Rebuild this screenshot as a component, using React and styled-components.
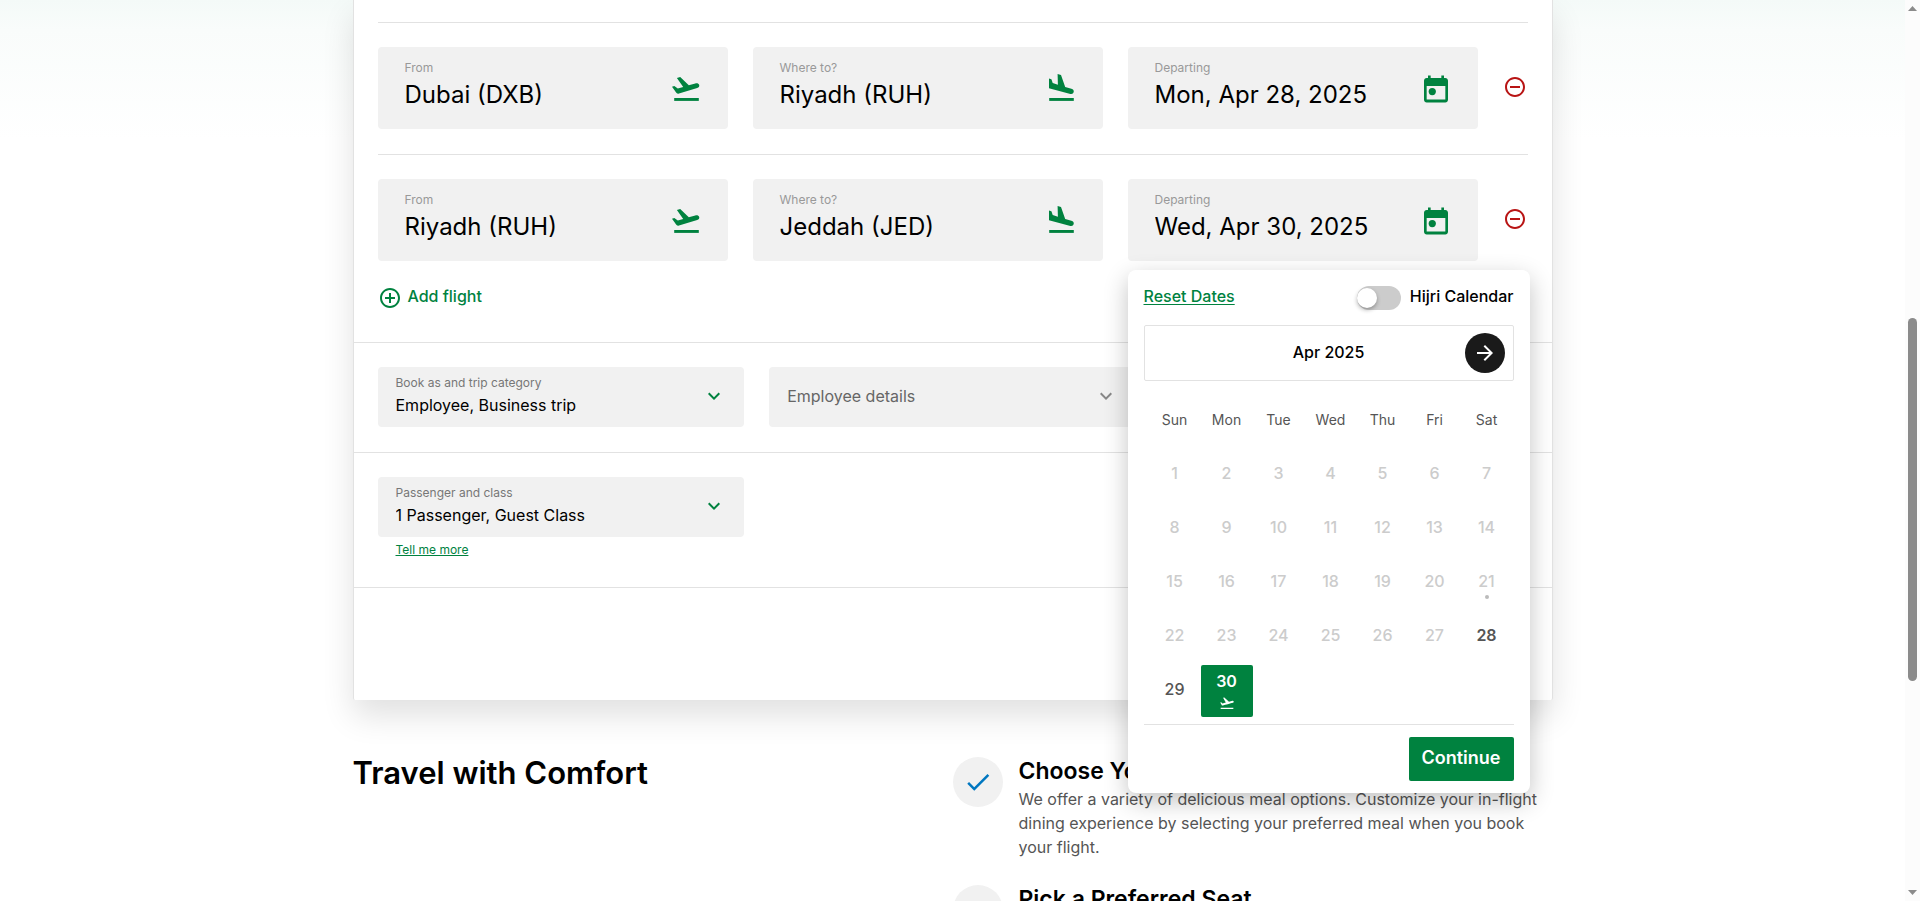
import React, { useState } from "react";
import styled, { createGlobalStyle } from "styled-components";
import {
  MdAddCircleOutline,
  MdArrowForward,
  MdCheck,
  MdExpandMore,
  MdFlightTakeoff,
  MdRemoveCircleOutline,
} from "react-icons/md";

const green = "#00823f";
const line = "#e2e2e2";
const fieldGrey = "#f1f1f1";

const GlobalStyle = createGlobalStyle`
  *, *::before, *::after { box-sizing: border-box; }
  body {
    margin: 0;
    background: #fff;
    color: #000;
    font-family: Inter, "Open Sans", sans-serif;
    font-size: 16px;
    line-height: 24px;
  }
  button, input, select { font: inherit; color: inherit; margin: 0; }
  button { border: 0; background: none; padding: 0; cursor: pointer; }
  h1, h2, h3, p { margin: 0; }
`;

const Shell = styled.div`
  display: flex;
  height: 100vh;
  overflow: hidden;
`;

const Main = styled.main`
  flex: 1;
  min-width: 0;
  background: linear-gradient(#f4faf8, #f9fcfb 30px, #fff 140px);
`;

const Container = styled.div`
  max-width: 1200px;
  margin: 0 auto;
`;

const Card = styled.section`
  padding-top: 22px;
  background: #fff;
  border: solid ${line};
  border-width: 0 1px;
  border-radius: 0 0 2px 2px;
  box-shadow: 0 16px 32px rgba(0, 0, 0, 0.12);
`;

const Flights = styled.div`
  padding: 0 24px 32px;
`;

const FlightRow = styled.div`
  display: grid;
  grid-template-columns: repeat(3, minmax(0, 1fr)) 25px;
  gap: 25px;
  align-items: center;
  padding: 24px 0 25px;
  border-top: 1px solid ${line};
`;

const FieldSlot = styled.div`
  position: relative;
`;

const Field = styled.div`
  display: flex;
  align-items: center;
  justify-content: space-between;
  min-height: 82px;
  padding: 13px 26px 9px 27px;
  border-radius: 4px;
  background: ${fieldGrey};
  svg { flex: none; color: ${green}; }
`;

const FieldText = styled.div`
  display: flex;
  flex-direction: column;
  flex: 1;
  min-width: 0;
  gap: ${(p) => (p.$large ? "3px" : "2px")};
  align-self: flex-start;
`;

const FieldLabel = styled.label`
  font-size: 12px;
  line-height: 16px;
  color: ${(p) => (p.$dark ? "#777" : "#999")};
`;

const FieldInput = styled.input`
  width: 100%;
  height: 32px;
  padding: 0;
  border: 0;
  outline: 0;
  background: none;
  font-size: 24px;
  line-height: 32px;
`;

const RemoveButton = styled.button`
  display: flex;
  justify-content: flex-end;
  padding: 0 1px 2px 0;
  color: #b81414;
`;

const AddButton = styled.button`
  display: flex;
  align-items: flex-start;
  gap: 6px;
  line-height: 20px;
  font-weight: 500;
  color: ${green};
`;

const Section = styled.div`
  min-height: ${(p) => p.$minHeight || "0"};
  padding: 24px 24px ${(p) => p.$bottom || "25px"};
  border-top: 1px solid ${line};
`;

const SelectGrid = styled.div`
  display: grid;
  grid-template-columns: repeat(3, minmax(0, 1fr));
  gap: 25px;
`;

const SelectBox = styled.div`
  display: flex;
  align-items: center;
  min-height: 60px;
  padding: 8px 18px 10px;
  border-radius: 4px;
  background: ${fieldGrey};
  color: ${(p) => (p.$muted ? "#666" : "#000")};
  svg { flex: none; color: ${(p) => (p.$muted ? "#888" : green)}; }
`;

const Select = styled.select`
  width: 100%;
  height: 24px;
  padding: 0;
  border: 0;
  outline: 0;
  appearance: none;
  background: none;
  line-height: 24px;
`;

const SmallLink = styled.a`
  display: block;
  width: max-content;
  margin: 5px 18px 0;
  font-size: 12px;
  line-height: 16px;
  color: ${green};
`;

const Popover = styled.div`
  position: absolute;
  z-index: 2;
  top: calc(100% + 9px);
  left: 0;
  width: 402px;
  padding: 16px 16px 12px;
  border-radius: 8px;
  background: #fff;
  box-shadow: 0 8px 24px rgba(0, 0, 0, 0.24);
`;

const PopoverHead = styled.div`
  display: flex;
  justify-content: space-between;
  line-height: 20px;
  font-weight: 500;
`;

const ResetButton = styled.button`
  align-self: flex-start;
  line-height: 20px;
  color: ${green};
  text-decoration: underline;
  text-underline-offset: 2px;
`;

const ToggleLabel = styled.label`
  display: flex;
  gap: 9px;
`;

const Toggle = styled.input`
  appearance: none;
  display: flex;
  align-items: center;
  width: 44px;
  height: 24px;
  border-radius: 12px;
  background: #ccc;
  cursor: pointer;
  &::before {
    content: "";
    width: 20px;
    height: 20px;
    border-radius: 50%;
    background: #fff;
    box-shadow: 0 2px 4px rgba(0, 0, 0, 0.3);
  }
  &:checked { justify-content: flex-end; background: ${green}; }
`;

const MonthBar = styled.div`
  display: grid;
  grid-template-columns: 40px 1fr 40px;
  align-items: center;
  margin-top: 15px;
  padding: 7px 8px;
  border: 1px solid ${line};
  border-radius: 2px;
`;

const MonthName = styled.h3`
  grid-column: 2;
  padding-bottom: 3px;
  font-size: 16px;
  line-height: 24px;
  font-weight: 500;
  text-align: center;
`;

const NextButton = styled.button`
  display: grid;
  place-items: center;
  width: 40px;
  height: 40px;
  border-radius: 50%;
  background: #1a1a1a;
  color: #fff;
`;

const Calendar = styled.table`
  width: 364px;
  margin: 23px 1px 0 auto;
  table-layout: fixed;
  border-collapse: separate;
  border-spacing: 0 2px;
`;

const Weekday = styled.th`
  height: 41px;
  padding: 0 0 14px;
  font-size: 14px;
  font-weight: 400;
  color: #555;
`;

const DayCell = styled.td`
  height: 52px;
  padding: 0;
`;

const Day = styled.button`
  display: flex;
  flex-direction: column;
  align-items: center;
  justify-content: center;
  gap: ${(p) => (p.$selected ? "4px" : "0")};
  width: 100%;
  height: 52px;
  padding-bottom: ${(p) => (p.$selected ? "0" : "4px")};
  border-radius: 2px;
  line-height: 20px;
  font-weight: ${(p) => (p.$selected ? 600 : p.$strong ? 600 : 500)};
  color: ${(p) => (p.$selected ? "#fff" : p.disabled ? "#ccc" : "#555")};
  background: ${(p) => (p.$selected ? green : "none")};
`;

const TodayDay = styled(Day)`
  padding-top: 10px;
  padding-bottom: 4px;
  gap: 2px;
  &::after {
    content: "";
    width: 4px;
    height: 4px;
    border-radius: 50%;
    margin: 2px 0;
    background: #bbb;
  }
`;

const PopoverFoot = styled.div`
  display: flex;
  justify-content: flex-end;
  margin-top: 5px;
  padding-top: 12px;
  border-top: 1px solid ${line};
`;

const ContinueButton = styled.button`
  padding: 9px 13px 11px;
  border-radius: 2px;
  background: ${green};
  color: #fff;
  font-size: 18px;
  line-height: 24px;
  font-weight: 600;
`;

const Comfort = styled.section`
  display: grid;
  grid-template-columns: 1fr 1fr;
  padding-top: 57px;
`;

const ComfortTitle = styled.h2`
  font-size: 31px;
  line-height: 32px;
  font-weight: 600;
`;

const FeatureList = styled.div`
  display: flex;
  flex-direction: column;
  gap: 26px;
`;

const Feature = styled.article`
  display: flex;
  gap: 16px;
`;

const FeatureBadge = styled.span`
  display: grid;
  place-items: center;
  flex: none;
  width: 50px;
  height: 50px;
  border-radius: 50%;
  background: ${fieldGrey};
  color: #0077c0;
`;

const FeatureTitle = styled.h3`
  margin-bottom: 2px;
  font-size: 23px;
  line-height: 28px;
  font-weight: 600;
`;

const FeatureText = styled.p`
  color: #555;
`;

const Scrollbar = styled.div`
  display: flex;
  flex-direction: column;
  align-items: center;
  justify-content: space-between;
  width: 15px;
  padding: 6px 0;
  background: #fcfcfc;
  color: #8b8b8b;
  svg { display: block; }
`;

const Track = styled.div`
  display: flex;
  flex-direction: column;
  flex: 1;
  &::before { content: ""; flex: 307; }
  &::after { content: ""; flex: 209; }
`;

const Thumb = styled.div`
  flex: 362;
  width: 9px;
  border-radius: 5px;
  background: #8b8b8b;
`;

const TakeoffIcon = () => (
  <svg width="32" height="32" viewBox="0 0 32 32" fill="currentColor" aria-hidden="true">
    <path d="M6.900 3.900 10.200 3l8.600 8.200 6.500-1.700c1.900-.5 3.500.2 3.900 1.500.4 1.400-.5 2.600-2 3.100L9 19.500c-1.300.4-2.300.1-2.900-.9L2 12.700l2.300-.8 3.500 2.600 5.400-1.400z" />
    <path d="M4.200 24h24.600v2.900H4.200z" />
  </svg>
);

const LandingIcon = () => (
  <svg width="32" height="32" viewBox="0 0 32 32" fill="currentColor" aria-hidden="true">
    <path d="M4 4.600l2.400.7L7.700 9l5.200 1.700L12.600.1l3.400 1 4.200 12 6.200 1.700c1.900.5 2.700 1.900 2.300 3.300-.4 1.500-1.600 2.300-3.300 1.900L4 14.200z" />
    <path d="M4.200 24h24.600v2.900H4.200z" />
  </svg>
);

const CalendarIcon = () => (
  <svg width="32" height="32" viewBox="0 0 24 24" fill="currentColor" aria-hidden="true">
    <path
      fillRule="evenodd"
      d="M6 1.200h2V3h8V1.200h2V3h1c1.100 0 2 .9 2 2v14.300c0 1.100-.9 2-2 2H5c-1.100 0-2-.9-2-2V5c0-1.100.9-2 2-2h1zM5 9v10.200h14V9z"
    />
    <circle cx="9.200" cy="13.200" r="2.700" />
  </svg>
);

const TripField = ({ id, label, value, icon, children }) => (
  <FieldSlot>
    <Field>
      <FieldText $large>
        <FieldLabel htmlFor={id}>{label}</FieldLabel>
        <FieldInput id={id} defaultValue={value} />
      </FieldText>
      {icon}
    </Field>
    {children}
  </FieldSlot>
);

const SelectField = ({ id, label, value }) => (
  <SelectBox>
    <FieldText>
      <FieldLabel $dark htmlFor={id}>{label}</FieldLabel>
      <Select id={id}>
        <option>{value}</option>
      </Select>
    </FieldText>
    <MdExpandMore size={24} />
  </SelectBox>
);

const weekdays = ["Sun", "Mon", "Tue", "Wed", "Thu", "Fri", "Sat"];
const weeks = [0, 1, 2, 3, 4].map((w) =>
  weekdays.map((_, d) => w * 7 + d + 1).filter((n) => n <= 30)
);

const DayButton = ({ day }) => {
  if (day === 21) return <TodayDay disabled>{day}</TodayDay>;
  return (
    <Day disabled={day < 28} $strong={day === 28} $selected={day === 30}>
      {day}
      {day === 30 && <MdFlightTakeoff size={16} />}
    </Day>
  );
};

const DatePicker = () => {
  const [hijri, setHijri] = useState(false);
  return (
    <Popover>
      <PopoverHead>
        <ResetButton>Reset Dates</ResetButton>
        <ToggleLabel>
          <Toggle type="checkbox" checked={hijri} onChange={() => setHijri(!hijri)} />
          Hijri Calendar
        </ToggleLabel>
      </PopoverHead>
      <MonthBar>
        <MonthName>Apr 2025</MonthName>
        <NextButton aria-label="Next month">
          <MdArrowForward size={24} />
        </NextButton>
      </MonthBar>
      <Calendar>
        <thead>
          <tr>
            {weekdays.map((d) => (
              <Weekday key={d} scope="col">{d}</Weekday>
            ))}
          </tr>
        </thead>
        <tbody>
          {weeks.map((week) => (
            <tr key={week[0]}>
              {week.map((day) => (
                <DayCell key={day}>
                  <DayButton day={day} />
                </DayCell>
              ))}
            </tr>
          ))}
        </tbody>
      </Calendar>
      <PopoverFoot>
        <ContinueButton>Continue</ContinueButton>
      </PopoverFoot>
    </Popover>
  );
};

const flights = [
  { id: "leg2", from: "Dubai (DXB)", to: "Riyadh (RUH)", date: "Mon, Apr 28, 2025" },
  { id: "leg3", from: "Riyadh (RUH)", to: "Jeddah (JED)", date: "Wed, Apr 30, 2025", open: true },
];

export default function App() {
  return (
    <>
      <GlobalStyle />
      <Shell>
        <Main>
          <Container>
            <Card>
              <Flights>
                {flights.map((f) => (
                  <FlightRow key={f.id}>
                    <TripField id={`${f.id}-from`} label="From" value={f.from} icon={<TakeoffIcon />} />
                    <TripField id={`${f.id}-to`} label="Where to?" value={f.to} icon={<LandingIcon />} />
                    <TripField id={`${f.id}-date`} label="Departing" value={f.date} icon={<CalendarIcon />}>
                      {f.open && <DatePicker />}
                    </TripField>
                    <RemoveButton aria-label="Remove flight">
                      <MdRemoveCircleOutline size={24} />
                    </RemoveButton>
                  </FlightRow>
                ))}
                <AddButton>
                  <MdAddCircleOutline size={24} />
                  Add flight
                </AddButton>
              </Flights>
              <Section>
                <SelectGrid>
                  <SelectField id="category" label="Book as and trip category" value="Employee, Business trip" />
                  <SelectBox $muted>
                    <Select aria-label="Employee details">
                      <option>Employee details</option>
                    </Select>
                    <MdExpandMore size={24} />
                  </SelectBox>
                </SelectGrid>
              </Section>
              <Section $bottom="29px">
                <SelectGrid>
                  <SelectField id="passengers" label="Passenger and class" value="1 Passenger, Guest Class" />
                </SelectGrid>
                <SmallLink href="#classes">Tell me more</SmallLink>
              </Section>
              <Section $minHeight="113px" />
            </Card>
            <Comfort>
              <ComfortTitle>Travel with Comfort</ComfortTitle>
              <FeatureList>
                <Feature>
                  <FeatureBadge><MdCheck size={30} /></FeatureBadge>
                  <div>
                    <FeatureTitle>Choose Your Meal</FeatureTitle>
                    <FeatureText>
                      We offer a variety of delicious meal options. Customize your in-flight dining
                      experience by selecting your preferred meal when you book your flight.
                    </FeatureText>
                  </div>
                </Feature>
                <Feature>
                  <FeatureBadge><MdCheck size={30} /></FeatureBadge>
                  <div>
                    <FeatureTitle>Pick a Preferred Seat</FeatureTitle>
                  </div>
                </Feature>
              </FeatureList>
            </Comfort>
          </Container>
        </Main>
        <Scrollbar aria-hidden="true">
          <svg width="9" height="5" viewBox="0 0 9 5" fill="currentColor"><path d="M4.500 0 9 5H0z" /></svg>
          <Track><Thumb /></Track>
          <svg width="9" height="5" viewBox="0 0 9 5" fill="currentColor"><path d="M0 0h9L4.500 5z" /></svg>
        </Scrollbar>
      </Shell>
    </>
  );
}
